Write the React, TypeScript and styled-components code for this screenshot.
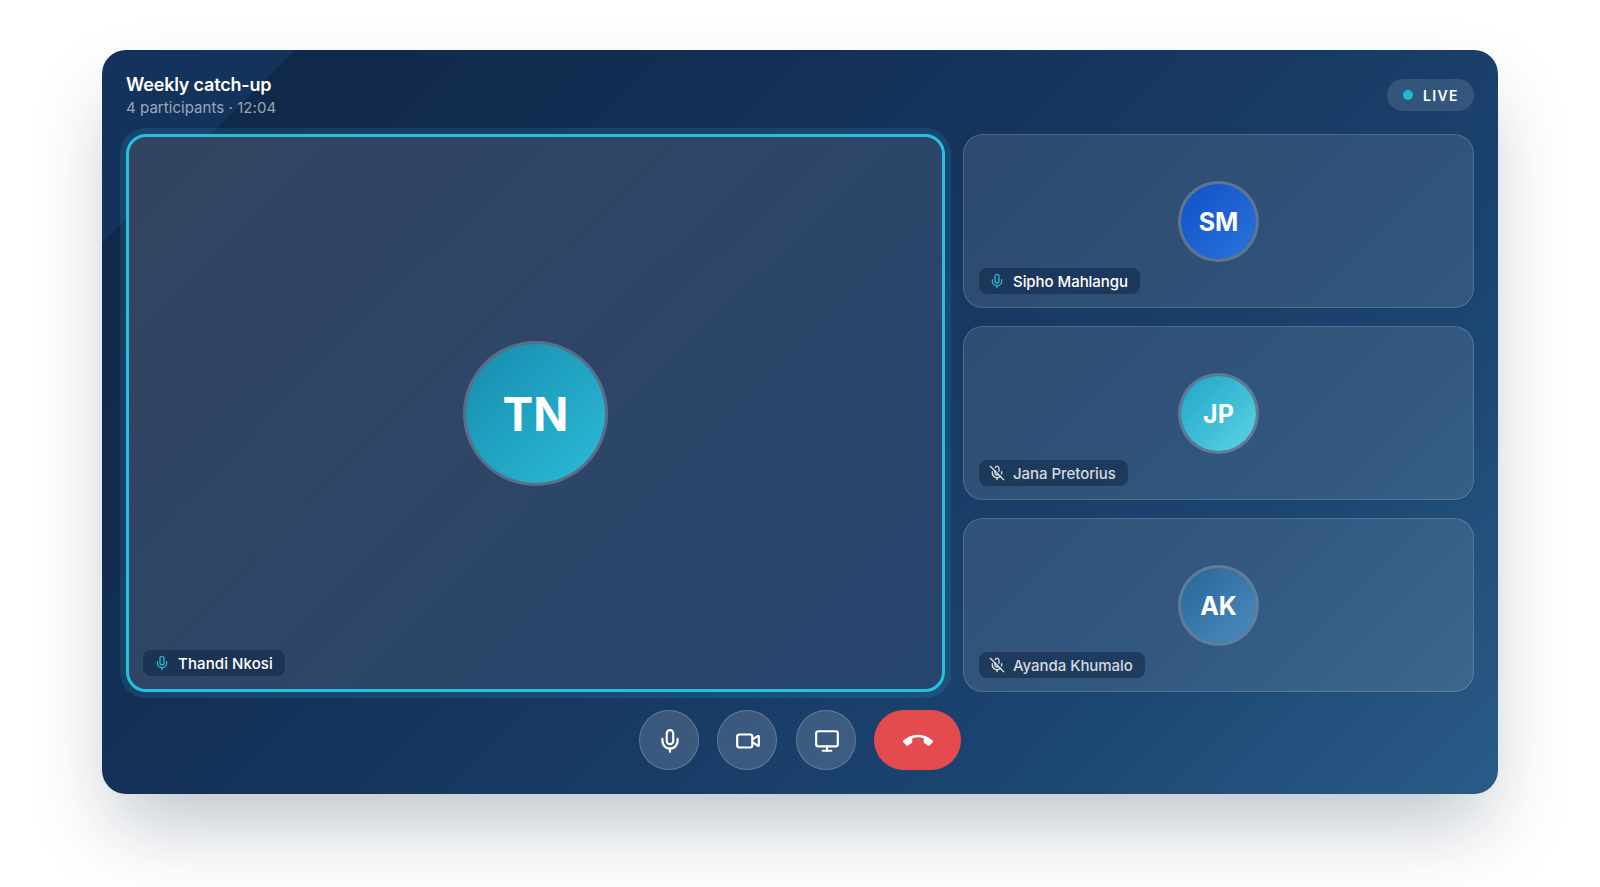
import React from 'react';
import styled, { createGlobalStyle } from 'styled-components';
import { Mic, MicOff, Monitor, Video } from 'lucide-react';
import { MdCallEnd } from 'react-icons/md';

const GlobalStyle = createGlobalStyle`
  html, body {
    margin: 0;
    background: #ffffff;
    font-family: Inter, "Liberation Sans", sans-serif;
    overflow: hidden;
  }
`;

const Page = styled.div`
  box-sizing: border-box;
  width: 1600px;
  height: 887px;
  padding: 50px 102px 93px;
`;

const Call = styled.section`
  box-sizing: border-box;
  height: 744px;
  padding: 24px;
  display: flex;
  flex-direction: column;
  border-radius: 24px;
  color: #fff;
  background: linear-gradient(
    135deg,
    #14335c 0,
    #14335c 136px,
    #102849 137px,
    #15325a 40%,
    #1b4470 75%,
    #2a5b87 100%
  );
  box-shadow: 0 40px 80px -12px rgba(15, 39, 70, 0.28);
`;

const Header = styled.header`
  height: 44px;
  margin-bottom: 16px;
  display: flex;
  align-items: center;
  justify-content: space-between;
`;

const Title = styled.h1`
  margin: 0 0 2px;
  font-size: 18px;
  line-height: 22px;
  font-weight: 600;
  letter-spacing: -0.2px;
`;

const Subtitle = styled.p`
  margin: 0;
  font-size: 15px;
  line-height: 20px;
  letter-spacing: 0.05px;
  color: rgba(255, 255, 255, 0.58);
`;

const LiveBadge = styled.div`
  height: 32px;
  margin-bottom: 2px;
  padding: 0 15px 0 16px;
  display: flex;
  align-items: center;
  gap: 10px;
  border-radius: 16px;
  background: rgba(255, 255, 255, 0.12);
  font-size: 14px;
  font-weight: 600;
  letter-spacing: 1.4px;
`;

const LiveDot = styled.span`
  width: 10px;
  height: 10px;
  border-radius: 50%;
  background: #22b8d6;
`;

const Stage = styled.div`
  flex: 1;
  min-height: 0;
  display: grid;
  grid-template-columns: 819px 1fr;
  gap: 18px;
`;

const Sidebar = styled.div`
  display: grid;
  grid-template-rows: repeat(3, 1fr);
  gap: 18px;
`;

const Tile = styled.article<{ $active?: boolean }>`
  position: relative;
  box-sizing: border-box;
  display: flex;
  align-items: center;
  justify-content: center;
  border-radius: 20px;
  background: ${p => (p.$active ? 'linear-gradient(135deg, #33445f, #2d4668 50%, #27446e)' : 'rgba(255, 255, 255, 0.1)')};
  border: ${p => (p.$active ? '3px solid #29c0e0' : '1px solid rgba(255, 255, 255, 0.16)')};
  box-shadow: ${p => (p.$active ? '0 0 0 6px rgba(41, 192, 224, 0.14)' : 'none')};
`;

const Avatar = styled.div<{ $large?: boolean; $from: string; $to: string }>`
  box-sizing: border-box;
  width: ${p => (p.$large ? 145 : 81)}px;
  height: ${p => (p.$large ? 145 : 81)}px;
  padding-top: 2px;
  display: flex;
  align-items: center;
  justify-content: center;
  border-radius: 50%;
  border: 3px solid rgba(255, 255, 255, 0.22);
  background: linear-gradient(135deg, ${p => p.$from}, ${p => p.$to});
  background-clip: padding-box;
  font-size: ${p => (p.$large ? 46 : 25)}px;
  font-weight: 700;
`;

const NameTag = styled.div<{ $active?: boolean; $muted?: boolean }>`
  position: absolute;
  left: ${p => (p.$active ? 14 : 15)}px;
  bottom: 13px;
  height: 26px;
  padding: 0 12px 0 ${p => (p.$active ? 11 : 10)}px;
  display: flex;
  align-items: center;
  gap: 8px;
  border-radius: 8px;
  background: rgba(15, 39, 70, 0.55);
  font-size: 15px;
  font-weight: 500;
  letter-spacing: ${p => (p.$active ? 0.1 : -0.05)}px;
  color: ${p => (p.$muted ? 'rgba(255, 255, 255, 0.82)' : '#fff')};
  svg {
    color: ${p => (p.$muted ? 'rgba(255, 255, 255, 0.82)' : '#29b4d0')};
  }
`;

const Controls = styled.div`
  margin-top: 18px;
  display: flex;
  justify-content: center;
  gap: 18.33px;
`;

const RoundButton = styled.button`
  box-sizing: border-box;
  width: 60px;
  height: 60px;
  padding: 2px 0 0 2px;
  display: flex;
  align-items: center;
  justify-content: center;
  border-radius: 50%;
  border: 1px solid rgba(255, 255, 255, 0.2);
  background: rgba(255, 255, 255, 0.15);
  color: #fff;
`;

const HangUpButton = styled(RoundButton)`
  width: 87px;
  border-radius: 30px;
  border: 0;
  background: #e34b4e;
`;

type Person = { initials: string; name: string; muted?: boolean; from: string; to: string };

const OTHERS: Person[] = [
  { initials: 'SM', name: 'Sipho Mahlangu', from: '#1150c6', to: '#2a74dc' },
  { initials: 'JP', name: 'Jana Pretorius', muted: true, from: '#1fa6c8', to: '#5cd3e4' },
  { initials: 'AK', name: 'Ayanda Khumalo', muted: true, from: '#2a6597', to: '#4a8cc0' },
];

export default function App() {
  return (
    <Page>
      <GlobalStyle />
      <Call>
        <Header>
          <div>
            <Title>Weekly catch-up</Title>
            <Subtitle>4 participants · 12:04</Subtitle>
          </div>
          <LiveBadge>
            <LiveDot />
            LIVE
          </LiveBadge>
        </Header>
        <Stage>
          <Tile $active>
            <Avatar $large $from="#178bac" $to="#2bbcd8">TN</Avatar>
            <NameTag $active>
              <Mic size={16} strokeWidth={2} />
              Thandi Nkosi
            </NameTag>
          </Tile>
          <Sidebar>
            {OTHERS.map(person => (
              <Tile key={person.initials}>
                <Avatar $from={person.from} $to={person.to}>{person.initials}</Avatar>
                <NameTag $muted={person.muted}>
                  {person.muted ? <MicOff size={16} strokeWidth={2} /> : <Mic size={16} strokeWidth={2} />}
                  {person.name}
                </NameTag>
              </Tile>
            ))}
          </Sidebar>
        </Stage>
        <Controls>
          <RoundButton><Mic size={26} strokeWidth={2} /></RoundButton>
          <RoundButton><Video size={26} strokeWidth={2} /></RoundButton>
          <RoundButton><Monitor size={26} strokeWidth={2} /></RoundButton>
          <HangUpButton><MdCallEnd size={30} /></HangUpButton>
        </Controls>
      </Call>
    </Page>
  );
}
